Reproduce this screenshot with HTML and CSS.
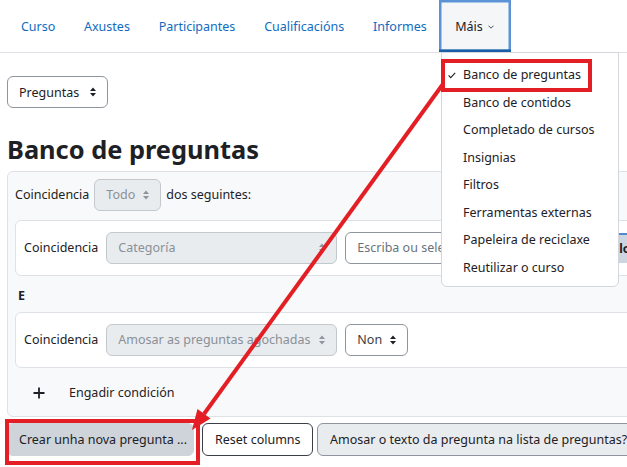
FILE: index.html
```html
<!DOCTYPE html>
<html lang="gl">
<head>
<meta charset="utf-8">
<title>Banco de preguntas</title>
<link rel="stylesheet" href="styles.css">
</head>
<body>
<div class="page">
  <nav class="tabs">
    <a class="tab" href="#">Curso</a>
    <a class="tab" href="#">Axustes</a>
    <a class="tab" href="#">Participantes</a>
    <a class="tab" href="#">Cualificacións</a>
    <a class="tab" href="#">Informes</a>
    <span class="tab tab-more">Máis
      <svg class="chevron" width="6" height="4" viewBox="0 0 6 4"><path d="M0.5 0.7 L3 3.2 L5.5 0.7" fill="none" stroke="#4a4f55" stroke-width="1"/></svg>
    </span>
  </nav>

  <main class="content">
    <div class="select select-nav">
      <span>Preguntas</span>
      <svg class="sort" width="6" height="10" viewBox="0 0 6 10"><path d="M3 0.5 L6 4 H0Z M0 6 H6 L3 9.5Z"/></svg>
    </div>

    <h2 class="title">Banco de preguntas</h2>

    <section class="filters">
      <div class="filter-head">
        <span>Coincidencia</span>
        <span class="select is-disabled">
          <span>Todo</span>
          <svg class="sort" width="6" height="10" viewBox="0 0 6 10"><path d="M3 0.5 L6 4 H0Z M0 6 H6 L3 9.5Z"/></svg>
        </span>
        <span class="head-tail">dos seguintes:</span>
      </div>

      <div class="condition">
        <span class="cond-label">Coincidencia</span>
        <span class="select is-disabled select-wide">
          <span>Categoría</span>
          <svg class="sort" width="6" height="10" viewBox="0 0 6 10"><path d="M3 0.5 L6 4 H0Z M0 6 H6 L3 9.5Z"/></svg>
        </span>
        <span class="textbox">Escriba ou seleccione</span>
        <span class="chip">Exemplo, Curso</span>
      </div>

      <div class="join">E</div>

      <div class="condition">
        <span class="cond-label">Coincidencia</span>
        <span class="select is-disabled select-wide">
          <span>Amosar as preguntas agochadas</span>
          <svg class="sort" width="6" height="10" viewBox="0 0 6 10"><path d="M3 0.5 L6 4 H0Z M0 6 H6 L3 9.5Z"/></svg>
        </span>
        <span class="select select-small">
          <span>Non</span>
          <svg class="sort" width="6" height="10" viewBox="0 0 6 10"><path d="M3 0.5 L6 4 H0Z M0 6 H6 L3 9.5Z"/></svg>
        </span>
      </div>

      <div class="add-cond">
        <svg class="plus" width="12" height="12" viewBox="0 0 12 12"><path d="M6 0.5 V11.5 M0.5 6 H11.5" stroke="#1d2125" stroke-width="1.8"/></svg>
        <span>Engadir condición</span>
      </div>
    </section>

    <div class="actions">
      <button class="btn btn-create">Crear unha nova pregunta ...</button>
      <button class="btn btn-outline">Reset columns</button>
      <button class="btn btn-toggle">Amosar o texto da pregunta na lista de preguntas?</button>
    </div>
  </main>

  <ul class="menu">
    <li class="menu-item is-current">
      <svg class="check" width="8" height="7" viewBox="0 0 8 7"><path d="M0.6 3.4 L2.7 5.6 L7.2 0.8" fill="none" stroke="#1d2125" stroke-width="1.1"/></svg>
      Banco de preguntas
    </li>
    <li class="menu-item">Banco de contidos</li>
    <li class="menu-item">Completado de cursos</li>
    <li class="menu-item">Insignias</li>
    <li class="menu-item">Filtros</li>
    <li class="menu-item">Ferramentas externas</li>
    <li class="menu-item">Papeleira de reciclaxe</li>
    <li class="menu-item">Reutilizar o curso</li>
  </ul>

  <!-- callouts drawn on top of the page -->
  <svg class="callouts" width="627" height="467" viewBox="0 0 627 467">
    <rect x="443" y="61" width="147" height="29" fill="none" stroke="#e31e24" stroke-width="4"/>
    <rect x="7" y="421" width="191" height="42" fill="none" stroke="#e31e24" stroke-width="4"/>
    <line x1="443" y1="84" x2="204" y2="414" stroke="#e31e24" stroke-width="4"/>
    <polygon points="192,430 210.5,418.5 197.5,409" fill="#e31e24"/>
  </svg>
</div>
</body>
</html>
```

FILE: styles.css
```css
* {
  box-sizing: border-box;
}

body {
  margin: 0;
  font-family: "Noto Sans", sans-serif;
  font-size: 12.5px;
  color: #1d2125;
  background: #fff;
  overflow: hidden;
}

.page {
  position: relative;
  width: 627px;
  height: 467px;
  overflow: hidden;
}

/* Course navigation tabs */
.tabs {
  display: flex;
  height: 53px;
  padding-left: 6.5px;
  border-bottom: 1px solid #dee2e6;
}

.tab {
  display: flex;
  align-items: center;
  padding: 0 14.4px;
  color: #0f6cbf;
  text-decoration: none;
  white-space: nowrap;
}

.tab-more {
  gap: 5px;
  margin-left: -2px;
  padding: 0 17px 0 16px;
  color: #1d2125;
  background: #f5f6f8;
  box-shadow: inset 0 -2.5px 0 #1b5ea8, inset 0 0 0 2.5px #5b93d6;
}

.chevron {
  margin-top: 1px;
}

/* Page body */
.content {
  width: 800px;
  padding: 23px 0 0 7px;
}

.select {
  display: inline-flex;
  align-items: center;
  gap: 8px;
  height: 32px;
  padding: 0 11px;
  border: 1px solid #8f959e;
  border-radius: 6px;
  background: #fff;
  color: #1d2125;
  white-space: nowrap;
}

.select .sort {
  fill: #1d2125;
}

.select-nav {
  width: 101px;
  justify-content: space-between;
}

.select.is-disabled {
  background: #e9ecef;
  border-color: #c3c8cd;
  color: #8a9097;
}

.select.is-disabled .sort {
  fill: #8f959e;
}

.select-wide {
  width: 231px;
  justify-content: space-between;
}

.select-small {
  color: #3b4046;
}

.title {
  margin: 26.5px 0 0;
  font-size: 25.4px;
  font-weight: 700;
  line-height: 1.17;
}

/* Filter conditions panel */
.filters {
  margin-top: 6.5px;
  padding: 7px;
  border: 1px solid #dee2e6;
  border-radius: 6px;
  background: #f8f9fa;
}

.filter-head {
  display: flex;
  align-items: center;
  gap: 4px;
}

.filter-head .select {
  margin-left: 1px;
}

.head-tail {
  margin-left: 1px;
}

.condition {
  display: flex;
  align-items: center;
  gap: 8px;
  margin-top: 9px;
  padding: 11px 8px;
  border: 1px solid #dee2e6;
  border-radius: 6px;
  background: #fff;
}

.textbox {
  display: flex;
  align-items: center;
  width: 220px;
  height: 32px;
  padding: 0 11px;
  border: 1px solid #8f959e;
  border-radius: 6px;
  color: #6a737b;
  white-space: nowrap;
  overflow: hidden;
}

.chip {
  display: flex;
  align-items: center;
  height: 30px;
  padding: 0 6px;
  border-top: 2px solid #4f8bd0;
  background: #cdd6e0;
  font-size: 12px;
  font-weight: 700;
  white-space: nowrap;
}

.join {
  margin: 10px 0 -3px 3px;
  font-weight: 700;
  line-height: 20px;
}

.add-cond {
  display: flex;
  align-items: center;
  gap: 24px;
  height: 32px;
  margin-top: 9px;
  padding-left: 18px;
}

/* Action buttons */
.actions {
  display: flex;
  margin-top: 6.5px;
}

.btn {
  height: 33px;
  padding: 0 11px;
  border: 1px solid transparent;
  border-radius: 6px;
  font-family: inherit;
  font-size: 12.5px;
  color: #1d2125;
  white-space: nowrap;
}

.btn-create {
  padding: 0 6px 0 11px;
  background: #ced4da;
  border-color: #ced4da;
}

.btn-outline {
  margin-left: 8px;
  padding: 0 11.5px 0 12px;
  background: #fff;
  border-color: #3a3f45;
}

.btn-toggle {
  margin-left: 4px;
  padding: 0 12px;
  background: #e9ecef;
  border-color: #8f959e;
}

/* "Máis" dropdown menu */
.menu {
  position: absolute;
  left: 441px;
  top: 52px;
  width: 178px;
  margin: 0;
  padding: 8px 0 5px;
  list-style: none;
  background: #fff;
  border: 1px solid #d3d6da;
  border-radius: 0 0 6px 6px;
}

.menu-item {
  position: relative;
  padding-left: 21px;
  line-height: 27.5px;
  white-space: nowrap;
}

.check {
  position: absolute;
  left: 6px;
  top: 10.5px;
}

.callouts {
  position: absolute;
  left: 0;
  top: 0;
  pointer-events: none;
}
```
